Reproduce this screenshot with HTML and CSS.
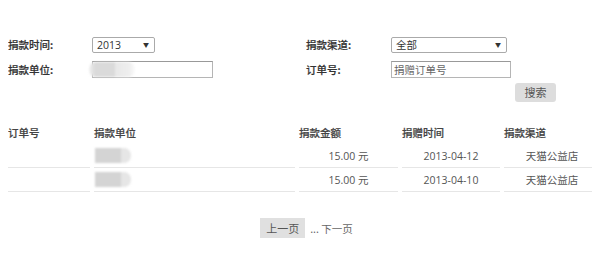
FILE: index.html
```html
<!DOCTYPE html>
<html lang="zh-CN">
<head>
    <meta charset="UTF-8">
    <title>捐款记录</title>
    <link rel="stylesheet" href="styles.css">
</head>
<body>
    <!-- 查询条件 -->
    <div class="filters">
        <label class="field-label">捐款时间:</label>
        <div class="fake-select year-select"><span>2013</span><span class="arrow">▼</span></div>
        <label class="field-label">捐款渠道:</label>
        <div class="fake-select channel-select"><span>全部</span><span class="arrow">▼</span></div>

        <label class="field-label">捐款单位:</label>
        <div class="text-input unit-input"><span class="blur-mask"></span></div>
        <label class="field-label">订单号:</label>
        <input type="text" class="text-input order-input" placeholder="捐赠订单号">
    </div>
    <div class="search-row">
        <button class="gray-btn search-btn">搜索</button>
    </div>

    <!-- 结果列表 -->
    <table class="orders">
        <colgroup>
            <col style="width: 82px">
            <col style="width: 201px">
            <col style="width: 99px">
            <col style="width: 98px">
            <col style="width: 96px">
        </colgroup>
        <thead>
            <tr>
                <th>订单号</th>
                <th>捐款单位</th>
                <th>捐款金额</th>
                <th>捐赠时间</th>
                <th>捐款渠道</th>
            </tr>
        </thead>
        <tbody>
            <tr>
                <td></td>
                <td class="unit-cell"><span class="blur-mask"></span></td>
                <td class="center">15.00 元</td>
                <td class="center">2013-04-12</td>
                <td class="center">天猫公益店</td>
            </tr>
            <tr>
                <td></td>
                <td class="unit-cell"><span class="blur-mask"></span></td>
                <td class="center">15.00 元</td>
                <td class="center">2013-04-10</td>
                <td class="center">天猫公益店</td>
            </tr>
        </tbody>
    </table>

    <div class="pager">
        <button class="gray-btn prev-btn">上一页</button>
        <span class="pager-text">... 下一页</span>
    </div>
</body>
</html>
```

FILE: styles.css
```css
body {
    margin: 8px;
    background-color: #fff;
    color: #555;
    font-family: "Open Sans", "Noto Sans CJK SC", sans-serif;
    font-size: 10.5px;
    overflow: hidden;
}

.filters {
    display: grid;
    grid-template-columns: 84px 214px 85px auto;
    row-gap: 8px;
    align-items: center;
    padding-top: 29px;
}

.field-label {
    color: #333;
    font-weight: 500;
    font-family: "Noto Sans CJK SC", sans-serif;
    font-size: 10.5px;
    line-height: 16px;
    -webkit-text-stroke: 0.2px #333;
}

.fake-select {
    display: flex;
    justify-content: space-between;
    align-items: center;
    height: 16px;
    box-sizing: border-box;
    padding: 0 5px 0 4px;
    border: 1px solid #aaa;
    border-radius: 2px;
    color: #333;
    line-height: 14px;
}

.year-select {
    width: 63px;
}

.channel-select {
    width: 116px;
}

.fake-select .arrow {
    font-size: 6px;
    color: #333;
}

.text-input {
    display: block;
    height: 17px;
    box-sizing: border-box;
    padding: 0 2px;
    margin: 0;
    border: 1px solid #b5b5b5;
    border-top-color: #999;
    font-family: "Noto Sans CJK SC", sans-serif;
    font-size: 10.5px;
    color: #333;
    outline: none;
}

.text-input::placeholder {
    color: #666;
}

.unit-input {
    width: 121px;
    position: relative;
}

.order-input {
    width: 120px;
}

.blur-mask {
    display: block;
    width: 36px;
    height: 15px;
    background: linear-gradient(to right, #d4d4d4 0, #d4d4d4 26px, #e6e6e6 26px);
    border-radius: 0 7px 7px 0;
    filter: blur(1px);
}

.unit-input .blur-mask {
    position: absolute;
    left: -4px;
    top: 0;
    width: 46px;
    height: 15px;
    background: linear-gradient(to right, #f0f0f0 0, #dadada 6px, #dadada 26px, #e8e8e8 26px, #eeeeee 40px, #fafafa 46px);
    border-radius: 7px;
}

.search-row {
    display: flex;
    justify-content: flex-end;
    padding-right: 36px;
    margin-top: 5px;
}

.gray-btn {
    background-color: #ddd;
    border: none;
    border-radius: 3px;
    color: #555;
    font-family: "Noto Sans CJK SC", sans-serif;
    font-size: 11px;
    padding: 0;
    cursor: pointer;
}

.search-btn {
    width: 41px;
    height: 19px;
    line-height: 19px;
}

.orders {
    width: 600px;
    margin: 18px 0 0 -4px;
    table-layout: fixed;
    border-collapse: separate;
    border-spacing: 4px 0;
}

.orders th {
    height: 24px;
    padding: 0;
    text-align: left;
    font-weight: 500;
    color: #444;
    font-family: "Noto Sans CJK SC", sans-serif;
    font-size: 10.5px;
    -webkit-text-stroke: 0.2px #444;
}

.orders td {
    height: 23px;
    padding: 0;
    border-bottom: 1px solid #e6e6e6;
    color: #555;
}

.orders td.center {
    text-align: center;
}

.unit-cell .blur-mask {
    margin-left: 1px;
}

.pager {
    display: flex;
    justify-content: center;
    align-items: center;
    gap: 5px;
    margin-top: 26px;
    padding-left: 13px;
}

.prev-btn {
    width: 45px;
    height: 20px;
    line-height: 20px;
    border-radius: 0;
    background-color: #e0e0e0;
}

.pager-text {
    color: #666;
    font-family: "Noto Sans CJK SC", sans-serif;
}
```
